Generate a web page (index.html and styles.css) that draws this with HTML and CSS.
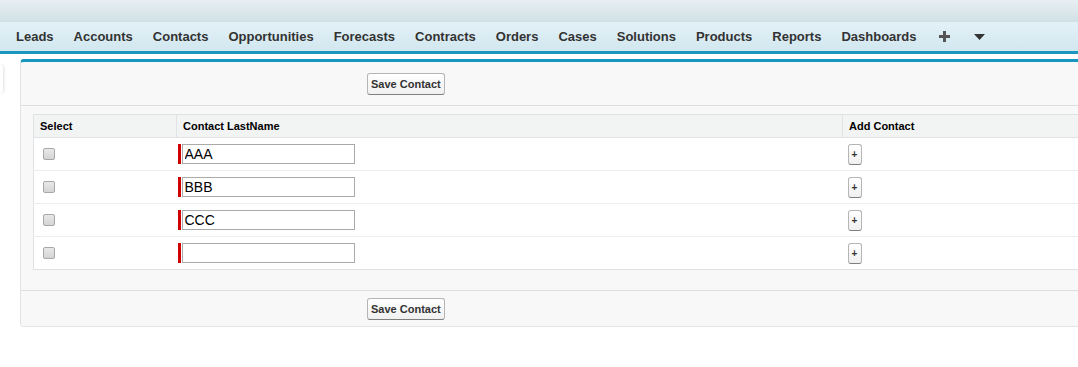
FILE: index.html
```html
<!DOCTYPE html>
<html lang="en">

<head>
    <meta charset="UTF-8">
    <meta name="viewport" content="width=device-width, initial-scale=1.0">
    <title>Add Contacts</title>
    <link rel="stylesheet" href="styles.css">
</head>

<body>
    <div class="top-bar"></div>
    <div class="tab-bar">
        <ul class="tabs">
            <li>Leads</li>
            <li>Accounts</li>
            <li>Contacts</li>
            <li>Opportunities</li>
            <li>Forecasts</li>
            <li>Contracts</li>
            <li>Orders</li>
            <li>Cases</li>
            <li>Solutions</li>
            <li>Products</li>
            <li>Reports</li>
            <li>Dashboards</li>
            <li class="tab-icon">
                <svg width="11" height="11" viewBox="0 0 11 11"><path d="M4 0h3v4h4v3H7v4H4V7H0V4h4z" fill="#555"/></svg>
            </li>
            <li class="tab-icon">
                <svg width="11" height="6" viewBox="0 0 11 6"><path d="M0 0h11L5.5 6z" fill="#333"/></svg>
            </li>
        </ul>
    </div>

    <div class="content">
        <div class="sidebar-handle"></div>
        <div class="panel">
            <div class="panel-header">
                <button class="btn">Save Contact</button>
            </div>

            <table class="list">
                <thead>
                    <tr>
                        <th class="col-select">Select</th>
                        <th class="col-name">Contact LastName</th>
                        <th>Add Contact</th>
                    </tr>
                </thead>
                <tbody>
                    <tr>
                        <td><input type="checkbox" class="check"></td>
                        <td><div class="required"><input type="text" class="text-input" value="AAA"></div></td>
                        <td><button class="btn btn-small">+</button></td>
                    </tr>
                    <tr>
                        <td><input type="checkbox" class="check"></td>
                        <td><div class="required"><input type="text" class="text-input" value="BBB"></div></td>
                        <td><button class="btn btn-small">+</button></td>
                    </tr>
                    <tr>
                        <td><input type="checkbox" class="check"></td>
                        <td><div class="required"><input type="text" class="text-input" value="CCC"></div></td>
                        <td><button class="btn btn-small">+</button></td>
                    </tr>
                    <tr>
                        <td><input type="checkbox" class="check"></td>
                        <td><div class="required"><input type="text" class="text-input" value=""></div></td>
                        <td><button class="btn btn-small">+</button></td>
                    </tr>
                </tbody>
            </table>

            <div class="panel-footer">
                <button class="btn">Save Contact</button>
            </div>
        </div>
    </div>
</body>

</html>
```

FILE: styles.css
```css
body {
    margin: 0;
    font-family: Arial, "Liberation Sans", sans-serif;
    font-size: 12px;
    color: #000;
    background: #fff;
    overflow: hidden;
}

.top-bar {
    height: 22px;
    background: linear-gradient(#e9eff2, #cfe0e6);
}

.tab-bar {
    height: 29px;
    background: linear-gradient(#e3f1f7, #d2e7ef);
    border-bottom: 3px solid #1b96c1;
}

.tabs {
    list-style: none;
    margin: 0;
    padding: 0 0 0 6px;
    display: flex;
    height: 29px;
    align-items: center;
}

.tabs li {
    padding: 0 10px;
    font-size: 13px;
    font-weight: bold;
    color: #333;
    line-height: 29px;
}

.tabs .tab-icon {
    display: flex;
    align-items: center;
    padding: 0 12px;
}

.content {
    display: flex;
    padding-top: 5px;
}

.sidebar-handle {
    flex: none;
    width: 3px;
    height: 28px;
    margin-top: 6px;
    margin-right: 17px;
    border-radius: 0 3px 3px 0;
    box-shadow: 1px 0 3px rgba(0, 0, 0, 0.12);
}

.panel {
    flex: none;
    width: 1070px;
    background: #f8f8f8;
    border-top: 3px solid #1797c0;
    border-left: 1px solid #e0e3e5;
    border-bottom: 1px solid #e4e4e4;
    border-radius: 4px 0 0 4px;
}

.panel-header {
    height: 43px;
    padding-left: 346px;
    display: flex;
    align-items: center;
    border-bottom: 1px solid #dedede;
}

.btn {
    font-family: Arial, "Liberation Sans", sans-serif;
    font-size: 11px;
    font-weight: bold;
    color: #333;
    height: 22px;
    padding: 0 3px;
    border: 1px solid #b5b5b5;
    border-bottom-color: #7f7f7f;
    border-radius: 3px;
    background: linear-gradient(#ffffff, #f0f0f0);
    cursor: pointer;
}

.btn-small {
    width: 14px;
    height: 21px;
    padding: 0;
    font-size: 10px;
}

.list {
    margin: 8px 0 20px 12px;
    width: 1060px;
    border-collapse: collapse;
    background: #fff;
    border: 1px solid #e0e3e5;
}

.list th {
    height: 22px;
    padding: 0 6px;
    text-align: left;
    font-size: 11px;
    font-weight: bold;
    background: #f2f3f3;
    border-bottom: 1px solid #e0e3e5;
    border-left: 1px solid #e0e3e5;
}

.list th:first-child {
    border-left: none;
}

.list .col-select {
    width: 130px;
}

.list .col-name {
    width: 653px;
}

.list td {
    height: 32px;
    padding: 0 5px 0 1px;
    border-bottom: 1px solid #ededed;
}

.list td:first-child {
    padding-left: 9px;
}

.list tr:last-child td {
    border-bottom: none;
}

.list td:last-child {
    padding-left: 5px;
}

.check {
    appearance: none;
    display: block;
    width: 12px;
    height: 12px;
    margin: 0;
    border: 1px solid #a8a8a8;
    border-radius: 2px;
    background: linear-gradient(#e8e8e8, #d4d4d4);
}

.required {
    display: flex;
    align-items: stretch;
    gap: 1px;
}

.required::before {
    content: "";
    width: 3px;
    background: #d00000;
}

.text-input {
    width: 167px;
    height: 18px;
    padding: 0 2px;
    margin: 0;
    border: 1px solid #aaa;
    font-family: Arial, "Liberation Sans", sans-serif;
    font-size: 14px;
    color: #000;
}

.panel-footer {
    height: 35px;
    padding-left: 346px;
    display: flex;
    align-items: center;
    border-top: 1px solid #dedede;
}
```
